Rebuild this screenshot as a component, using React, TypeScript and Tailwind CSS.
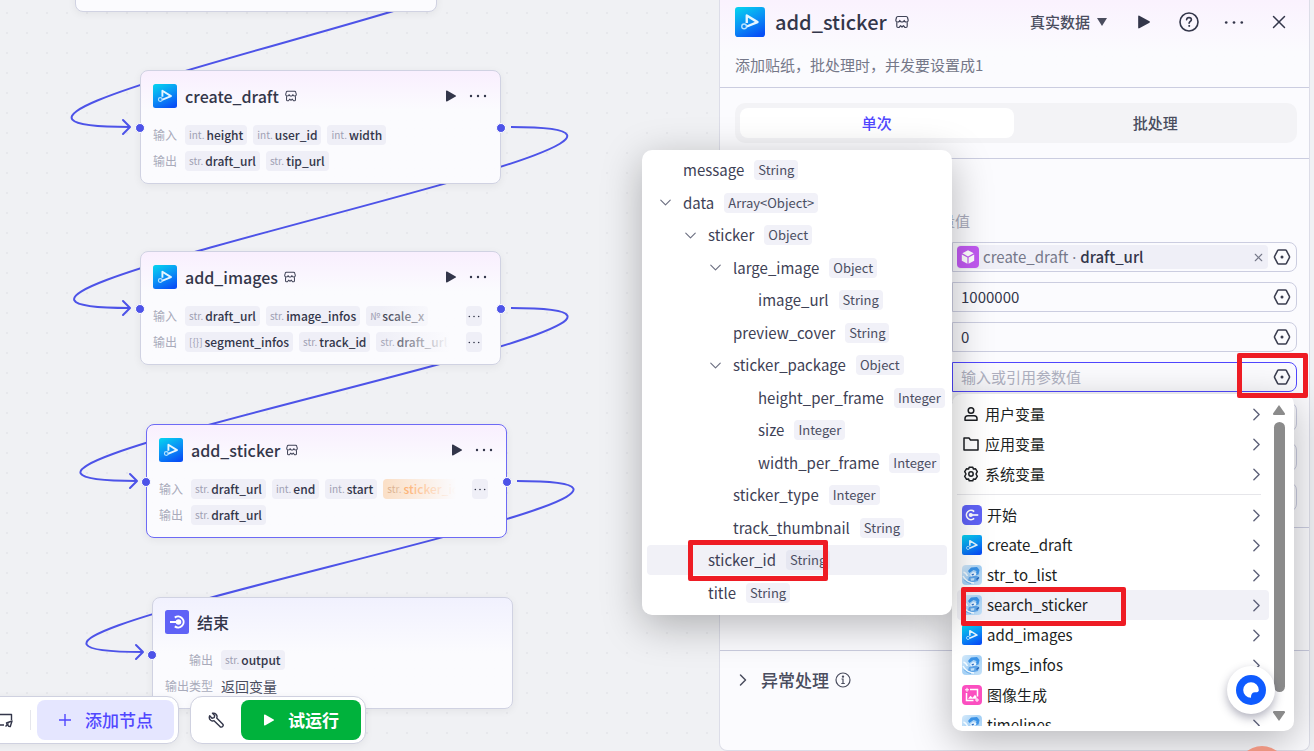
import type { ReactNode } from "react";
import { ChevronDown, ChevronRight, X } from "lucide-react";

type IconProps = { className?: string };

function PluginIcon({ className }: IconProps) {
  return (
    <svg viewBox="0 0 24 24" className={className} aria-hidden="true">
      <defs>
        <linearGradient id="plugin-bg" x1="0.2" y1="0" x2="0.7" y2="1">
          <stop offset="0" stopColor="#06cdf0" />
          <stop offset="0.5" stopColor="#0a92f5" />
          <stop offset="1" stopColor="#0850f6" />
        </linearGradient>
      </defs>
      <rect width="24" height="24" rx="2.5" fill="url(#plugin-bg)" />
      <path d="M9.400 12.800V6.800L18 12.100L8.900 15.800" fill="none" stroke="#e6f6ff" strokeWidth="1.900" strokeLinejoin="round" />
      <circle cx="7.300" cy="15.500" r="1.900" fill="none" stroke="#b5e2ff" strokeWidth="1.100" />
    </svg>
  );
}

function PhotoIcon({ className }: IconProps) {
  return (
    <svg viewBox="0 0 20 20" className={className} aria-hidden="true">
      <defs>
        <linearGradient id="photo-bg" x1="0" y1="0" x2="1" y2="1">
          <stop offset="0" stopColor="#d6ebfb" />
          <stop offset="0.5" stopColor="#a4d0f5" />
          <stop offset="1" stopColor="#c6e2f9" />
        </linearGradient>
      </defs>
      <rect width="20" height="20" rx="4" fill="url(#photo-bg)" />
      <path d="M9 2.500l6-.5 2.500 3-1 4.500-3 .5 1-4-3-1-4 3-1.500-2z" fill="#3a92e6" />
      <path d="M8 9.500l3-2.500 3.500 1-1 3.500-4 1z" fill="#e6f4ff" />
      <path d="M9.500 9.300l2-.8.500 1.500-2 .5z" fill="#2d6fc4" />
      <path d="M7 12l7-1.500 3 1.500-1 4-6 1.500-4-2z" fill="#5ea3e6" />
      <path d="M8.500 13.500l4-.5-.5 2.500-3 .3z" fill="#bfdff8" />
      <path d="M1 11c2 4 5 6.500 11 7M1.500 7c1.500.5 3 2 4 4" stroke="#f4fbff" strokeWidth="1.500" fill="none" />
      <path d="M2 14.500c2 2.500 4 3.500 7 4" stroke="#69aeea" strokeWidth="1" fill="none" />
      <path d="M14.500 14.500l2.500-2" stroke="#2360b4" strokeWidth="1.300" />
    </svg>
  );
}

function StoreIcon({ className }: IconProps) {
  return (
    <svg viewBox="0 0 14 14" className={className} fill="none" stroke="#414458" strokeWidth="1.200" strokeLinejoin="round" strokeLinecap="round" aria-hidden="true">
      <path d="M2.800 1.500h8.400c.8 0 1.200.4 1.300 1l.7 2.700c0 1-.9 1.800-1.900 1.800s-2.100-.7-2.100-1.700C9.200 6.300 8.100 7 7 7s-2.200-.7-2.200-1.700C4.800 6.300 3.700 7 2.700 7S.8 6.200.8 5.200l.7-2.700c.1-.6.500-1 1.300-1z" />
      <path d="M1.800 7.500v3.800c0 .8.400 1.200 1.200 1.200h1L5.600 10.600 7 12l1.400-1.400L10 12.500h1c.8 0 1.200-.4 1.200-1.200V7.500" />
    </svg>
  );
}

function PlayIcon({ className }: IconProps) {
  return (
    <svg viewBox="0 0 12 12" className={className} fill="currentColor" aria-hidden="true">
      <path d="M1 1.200c0-.7.500-.9 1-.6l8.700 4.800c.500.300.500.900 0 1.200L2 11.400c-.500.300-1 .1-1-.6z" />
    </svg>
  );
}

function DotsIcon({ className }: IconProps) {
  return (
    <svg viewBox="0 0 18 4" className={className} fill="currentColor" aria-hidden="true">
      <circle cx="2" cy="2" r="1.200" />
      <circle cx="9" cy="2" r="1.200" />
      <circle cx="16" cy="2" r="1.200" />
    </svg>
  );
}

function HexIcon() {
  return (
    <svg viewBox="0 0 18 18" className="size-[18px]" fill="none" stroke="#3a3d4f" strokeWidth="1.500" strokeLinejoin="round" aria-hidden="true">
      <path d="M5.600 2h6.800c.400 0 .8.200 1 .6l3 5.700c.2.500.2.900 0 1.400l-3 5.700c-.2.400-.6.600-1 .6H5.600c-.400 0-.8-.2-1-.6l-3-5.700c-.2-.500-.2-.900 0-1.400l3-5.700c.2-.400.6-.6 1-.6z" />
      <circle cx="9" cy="9" r="1.500" fill="#3a3d4f" stroke="none" />
    </svg>
  );
}

function TerminalIcon({ className, flip }: IconProps & { flip?: boolean }) {
  return (
    <svg viewBox="0 0 24 24" className={className} aria-hidden="true">
      <rect width="24" height="24" rx={flip ? 5 : 2.5} fill="#5f62f6" />
      <g fill="none" stroke="#fff" strokeWidth="2">
        {flip ? (
          <>
            <path d="M14.600 8A5.500 5.500 0 1 0 14.600 16" />
            <path d="M11 12h8.500" />
            <circle cx="10.500" cy="12" r="1.500" fill="#fff" />
          </>
        ) : (
          <>
            <path d="M9.800 7.600A5.500 5.500 0 1 1 9.800 16.400" />
            <path d="M5 12h8" />
            <circle cx="13.500" cy="12" r="1.800" fill="#fff" />
          </>
        )}
      </g>
    </svg>
  );
}

function GeneratedImageIcon({ className }: IconProps) {
  return (
    <svg viewBox="0 0 20 20" className={className} aria-hidden="true">
      <rect width="20" height="20" rx="4" fill="#fb4fc0" />
      <path d="M8 4.500h7.500v7M4.500 8v7.500h7" fill="none" stroke="#fff" strokeWidth="1.500" />
      <path d="M6 13.800l2.500-3 2 2 2.500-3 1.500 2v2z" fill="#fff" />
      <path d="M5 2.800v4M3 4.800h4M15 13v4M13 15h4" stroke="#fff" strokeWidth="1" />
    </svg>
  );
}

function CubeIcon() {
  return (
    <svg viewBox="0 0 22 22" className="size-[22px] shrink-0" aria-hidden="true">
      <rect width="22" height="22" rx="4" fill="#c159f1" />
      <path d="M11 4.300l5.700 3L11 10.400 5.300 7.300z" fill="#fff" />
      <path d="M4.800 8.500l5.600 3v6.300l-5.600-3.100zM17.200 8.500l-5.600 3v6.300l5.600-3.100z" fill="#fff" />
    </svg>
  );
}

type Field = { kind: string; name: string; warn?: boolean };

function Chip({ kind, name, warn }: Field) {
  return (
    <span className={`flex h-5 shrink-0 items-center gap-[2px] rounded-[4px] px-1 ${warn ? "bg-[#fbe0c8]" : "bg-[#efeff7]"}`}>
      <span className={`text-[10px] leading-5 ${warn ? "text-[#d9ad88]" : "text-[#9fa1b4]"}`}>{kind}</span>
      <span className={`text-[12px] leading-5 font-medium ${warn ? "text-[#ff9640]" : "text-[#33364a]"}`}>{name}</span>
    </span>
  );
}

function FieldRow({ label, fields, more }: { label: string; fields: Field[]; more?: boolean }) {
  return (
    <div className="flex h-5 items-center gap-2">
      <span className="w-6 shrink-0 text-[12px] leading-5 text-[#a9abbb]">{label}</span>
      <div className="relative flex min-w-0 flex-1 gap-[6px] overflow-hidden">
        {fields.map((f) => (
          <Chip key={f.name} {...f} />
        ))}
        {more && (
          <span className="absolute inset-y-0 right-0 flex w-[108px] items-center justify-end bg-linear-to-r from-transparent to-[#fbfbfe] to-65% pr-[6px]">
            <span className="flex h-5 w-4 items-center justify-center rounded-[4px] bg-[#efeff7] text-[#33364a]">
              <DotsIcon className="h-[3px] w-3" />
            </span>
          </span>
        )}
      </div>
    </div>
  );
}

function Port({ side }: { side: "left" | "right" }) {
  return (
    <span
      className={`absolute top-[52px] size-[10px] rounded-full border border-white bg-[#4d53e8] ${
        side === "left" ? "left-[-6px]" : "right-[-6px]"
      }`}
    />
  );
}

type NodeProps = { title: string; place: string; border: string; inputs: Field[]; outputs: Field[]; moreIn?: boolean; moreOut?: boolean };

function PluginNode({ title, place, border, inputs, outputs, moreIn, moreOut }: NodeProps) {
  return (
    <article className={`absolute w-[361px] rounded-lg border bg-linear-to-b from-[#f9effe] to-[#fbfbfe] to-35% px-3 pt-[13px] pb-3 shadow-[0_2px_8px_rgba(0,0,0,0.06)] ${border} ${place}`}>
      <Port side="left" />
      <Port side="right" />
      <header className="flex h-6 items-center gap-2 pr-px">
        <PluginIcon className="size-6" />
        <h2 className="text-[16px] leading-6 font-medium text-[#33364a]">{title}</h2>
        <StoreIcon className="-ml-0.5 size-3" />
        <button type="button" aria-label="运行节点" className="ml-auto text-[#33364a]">
          <PlayIcon className="size-3" />
        </button>
        <button type="button" aria-label="更多" className="ml-1 text-[#33364a]">
          <DotsIcon className="h-1 w-[18px]" />
        </button>
      </header>
      <div className="mt-[17px] flex flex-col gap-[6px]">
        <FieldRow label="输入" fields={inputs} more={moreIn} />
        <FieldRow label="输出" fields={outputs} more={moreOut} />
      </div>
    </article>
  );
}

function Edge({ d, x, y }: { d: string; x: number; y: number }) {
  return (
    <g>
      <path d={d} />
      <path d={`M${x - 7} ${y - 7}L${x} ${y}L${x - 7} ${y + 7}`} strokeLinecap="round" strokeLinejoin="round" />
    </g>
  );
}

function Canvas() {
  return (
    <section aria-label="工作流" className="absolute inset-0 overflow-hidden bg-[#f0f1f4] bg-[radial-gradient(#e7e8ec_1px,transparent_1.5px)] bg-size-[20px_20px] bg-position-[-3px_3px]">
      <svg className="absolute top-0 left-0 h-full w-full" fill="none" stroke="#4d53e8" strokeWidth="2" aria-hidden="true">
        <Edge d="M446 -45C740 -45 -160 127 130 127" x={130} y={127} />
        <Edge d="M511 127C805 127 -163 308 130 308" x={130} y={308} />
        <Edge d="M511 308C805 308 -157 481 137 481" x={137} y={481} />
        <Edge d="M517 481C811 481 -151 652 143 652" x={143} y={652} />
      </svg>
      <article className="absolute top-[-102px] left-[75px] h-[114px] w-[362px] rounded-lg border border-[#d0d2e2] bg-[#fbfbfe] shadow-[0_2px_8px_rgba(0,0,0,0.06)]" />
      <PluginNode
        title="create_draft"
        place="left-[140px] top-[70px]"
        border="border-[#d0d2e2]"
        inputs={[{ kind: "int.", name: "height" }, { kind: "int.", name: "user_id" }, { kind: "int.", name: "width" }]}
        outputs={[{ kind: "str.", name: "draft_url" }, { kind: "str.", name: "tip_url" }]}
      />
      <PluginNode
        title="add_images"
        place="left-[140px] top-[251px]"
        border="border-[#d0d2e2]"
        moreIn
        moreOut
        inputs={[{ kind: "str.", name: "draft_url" }, { kind: "str.", name: "image_infos" }, { kind: "№", name: "scale_x" }]}
        outputs={[{ kind: "[{}]", name: "segment_infos" }, { kind: "str.", name: "track_id" }, { kind: "str.", name: "draft_url" }]}
      />
      <PluginNode
        title="add_sticker"
        place="left-[146px] top-[424px]"
        border="border-[#6d6af5]"
        moreIn
        inputs={[{ kind: "str.", name: "draft_url" }, { kind: "int.", name: "end" }, { kind: "int.", name: "start" }, { kind: "str.", name: "sticker_id", warn: true }]}
        outputs={[{ kind: "str.", name: "draft_url" }]}
      />
      <article className="absolute top-[597px] left-[152px] h-[112px] w-[361px] rounded-lg border border-[#d0d2e2] bg-linear-to-b from-[#f1f1fe] to-[#fbfbfe] to-50% px-3 pt-3 shadow-[0_2px_8px_rgba(0,0,0,0.06)]">
        <Port side="left" />
        <header className="flex h-6 items-center gap-2">
          <TerminalIcon className="size-6" />
          <h2 className="text-[16px] leading-6 font-medium text-[#33364a]">结束</h2>
        </header>
        <dl className="mt-4 grid grid-cols-[48px_1fr] gap-x-2 gap-y-[6px]">
          <dt className="text-right text-[12px] leading-5 text-[#a9abbb]">输出</dt>
          <dd className="flex"><Chip kind="str." name="output" /></dd>
          <dt className="text-right text-[12px] leading-5 text-[#a9abbb]">输出类型</dt>
          <dd className="text-[14px] leading-5 text-[#4a4d5e]">返回变量</dd>
        </dl>
      </article>

      <div className="absolute bottom-[7px] left-[-41px] flex gap-[11px]">
        <div className="flex h-12 items-center rounded-xl border border-[#cfd1e0] bg-white pr-1 pl-[37px] shadow-[0_2px_8px_rgba(0,0,0,0.06)]">
          <button type="button" aria-label="注释" className="text-[#33364a]">
            <svg viewBox="0 0 16 16" className="size-4" fill="none" stroke="currentColor" strokeWidth="1.400" strokeLinejoin="round">
              <path d="M7 13H2V2.500h12.500V8" />
              <path d="M15 9l-5.500 2 .8 1.600 1.400 1.600 1.600.3z" />
              <path d="M8.500 14.500l3-3" />
            </svg>
          </button>
          <span className="mr-[6px] ml-[17px] h-5 w-px bg-[#e5e6ec]" />
          <button type="button" className="flex h-10 items-center gap-[13px] rounded-lg bg-[#e5e6ff] px-[21px] text-[17px] leading-6 font-medium text-[#5147ff]">
            <svg viewBox="0 0 14 14" className="size-[14px]" stroke="currentColor" strokeWidth="1.400">
              <path d="M7 1v12M1 7h12" />
            </svg>
            添加节点
          </button>
        </div>
        <div className="flex h-12 items-center rounded-xl border border-[#cfd1e0] bg-white pr-1 pl-[17px] shadow-[0_2px_8px_rgba(0,0,0,0.06)]">
          <button type="button" aria-label="调试工具" className="text-[#33364a]">
            <svg viewBox="0 0 16 16" className="size-4" fill="none" stroke="currentColor" strokeWidth="1.400" strokeLinejoin="round">
              <path d="M4.500 1.300L6.700 3.500 6.200 5.600 4 6.200 1.700 3.800C1 5.500 1.400 7.300 2.700 8.300 3.700 9 5 9.200 6 8.700L12 14.600C12.800 15.300 14 15.200 14.600 14.500 15.300 13.800 15.300 12.700 14.600 12L8.700 6C9.300 4.700 9 3.200 8 2.200 7 1.200 5.700 1 4.500 1.300z" />
            </svg>
          </button>
          <button type="button" className="ml-[17px] flex h-10 items-center gap-[13px] rounded-lg bg-[#00b23c] px-[22px] text-[17px] leading-6 font-bold text-white">
            <PlayIcon className="size-3" />
            试运行
          </button>
        </div>
      </div>
    </section>
  );
}

type TreeRow = { name: string; type: string; level: number; open?: boolean; marked?: boolean };

const treeRows: TreeRow[] = [
  { name: "message", type: "String", level: 0 },
  { name: "data", type: "Array<Object>", level: 0, open: true },
  { name: "sticker", type: "Object", level: 1, open: true },
  { name: "large_image", type: "Object", level: 2, open: true },
  { name: "image_url", type: "String", level: 3 },
  { name: "preview_cover", type: "String", level: 2 },
  { name: "sticker_package", type: "Object", level: 2, open: true },
  { name: "height_per_frame", type: "Integer", level: 3 },
  { name: "size", type: "Integer", level: 3 },
  { name: "width_per_frame", type: "Integer", level: 3 },
  { name: "sticker_type", type: "Integer", level: 2 },
  { name: "track_thumbnail", type: "String", level: 2 },
  { name: "sticker_id", type: "String", level: 1, marked: true },
  { name: "title", type: "String", level: 1 },
];

const indents = ["pl-[10px]", "pl-[35px]", "pl-[60px]", "pl-[85px]"];

function VariableTree() {
  return (
    <ul className="absolute top-[-244px] right-full flex h-[465px] w-[310px] flex-col rounded-[10px] bg-white p-[5px] shadow-[0_10px_40px_rgba(0,0,0,0.28)]">
      {treeRows.map((row) => (
        <li key={row.name} className="relative flex-1">
          <div className={`flex h-[30px] items-center gap-[10px] rounded-[4px] ${indents[row.level]} ${row.marked ? "bg-[#f1f1f7]" : ""}`}>
            <span className="flex w-4 shrink-0 justify-center text-[#6b6e80]">{row.open && <ChevronDown className="size-[19px] shrink-0" strokeWidth={1.4} />}</span>
            <span className="text-[15px] leading-6 text-[#3e4155]">{row.name}</span>
            <span className={`rounded-[4px] px-1 text-[13px] leading-5 text-[#4b4e62] ${row.marked ? "bg-[#e6e7f1]" : "bg-[#f1f1f8]"}`}>{row.type}</span>
          </div>
          {row.marked && <span className="absolute top-[-5px] left-[41px] h-[41px] w-[140px] rounded-[2px] border-[5px] border-[#ee1c24]" />}
        </li>
      ))}
    </ul>
  );
}

const scopes: { name: string; icon: ReactNode }[] = [
  {
    name: "用户变量",
    icon: (
      <>
        <circle cx="8" cy="4.500" r="2.800" />
        <path d="M2 14.200v-1.700c0-1.600 1.200-2.800 2.800-2.800h6.400c1.600 0 2.800 1.200 2.800 2.800v1.700z" />
      </>
    ),
  },
  { name: "应用变量", icon: <path d="M1 2h5l1.500 2H15v10H1z" /> },
  {
    name: "系统变量",
    icon: (
      <>
        <path d="M6.200 1.200h3.600l.6 1.900 2-.4 1.900 3L13 8l1.300 2.300-1.900 3-2-.4-.6 1.900H6.200l-.6-1.900-2 .4-1.900-3L3 8 1.700 5.700l1.900-3 2 .4z" />
        <circle cx="8" cy="8" r="2.200" />
      </>
    ),
  },
];

const sources: { name: string; icon: ReactNode; marked?: boolean }[] = [
  { name: "开始", icon: <TerminalIcon flip className="size-5" /> },
  { name: "create_draft", icon: <PluginIcon className="size-5" /> },
  { name: "str_to_list", icon: <PhotoIcon className="size-5" /> },
  { name: "search_sticker", icon: <PhotoIcon className="size-5" />, marked: true },
  { name: "add_images", icon: <PluginIcon className="size-5" /> },
  { name: "imgs_infos", icon: <PhotoIcon className="size-5" /> },
  { name: "图像生成", icon: <GeneratedImageIcon className="size-5" /> },
  { name: "timelines", icon: <PhotoIcon className="size-5" /> },
];

function SourceMenu() {
  return (
    <div className="absolute top-8 right-[3px] z-10 w-[342px]">
      <div className="flex h-[337px] rounded-[10px] bg-white p-[5px] shadow-[0_10px_40px_rgba(0,0,0,0.28)]">
        <div className="flex-1 overflow-hidden">
          <ul>
            {scopes.map((s) => (
              <li key={s.name}>
                <button type="button" className="flex h-[30px] w-full items-center gap-[6px] pr-0.5 pl-[6px] text-left text-[15px] leading-6 text-[#1c1f23]">
                  <svg viewBox="0 0 16 16" className="size-4" fill="none" stroke="currentColor" strokeWidth="1.500" strokeLinejoin="round" aria-hidden="true">{s.icon}</svg>
                  {s.name}
                  <ChevronRight className="ml-auto size-[21px] text-[#5d6078]" strokeWidth={1.6} />
                </button>
              </li>
            ))}
          </ul>
          <hr className="mt-[5px] mr-2 mb-[5px] border-[#e6e6ea]" />
          <ul>
            {sources.map((s) => (
              <li key={s.name} className="relative">
                <button type="button" className={`flex h-[30px] w-full items-center gap-[5px] rounded-[4px] pr-0.5 pl-[5px] text-left text-[15px] leading-6 text-[#1c1f23] ${s.marked ? "bg-[#f1f1f7]" : ""}`}>
                  {s.icon}
                  {s.name}
                  <ChevronRight className="ml-auto size-[21px] text-[#5d6078]" strokeWidth={1.6} />
                </button>
                {s.marked && <span className="absolute top-[-3px] left-1 z-10 h-[39px] w-[165px] rounded-[2px] border-[5px] border-[#ee1c24]" />}
              </li>
            ))}
          </ul>
        </div>
        <div className="flex w-5 flex-col items-center pt-[6px] pb-[5px] text-[#8b8b8b]">
          <svg viewBox="0 0 12 10" className="h-[10px] w-3" fill="currentColor" aria-hidden="true"><path d="M6 0l6 8.500c0 1-.5 1.500-1 1.500H1c-.5 0-1-.5-1-1.500z" /></svg>
          <span className="mt-[7px] h-[270px] w-[11px] rounded-full bg-[#8b8b8b]" />
          <svg viewBox="0 0 12 10" className="mt-auto h-[10px] w-3" fill="currentColor" aria-hidden="true"><path d="M6 10L0 1.500C0 .5.500 0 1 0h10c.5 0 1 .5 1 1.500z" /></svg>
        </div>
      </div>
      <VariableTree />
    </div>
  );
}

function ValueField({ children, active }: { children?: ReactNode; active?: boolean }) {
  return (
    <div className={`relative flex h-[30px] items-center rounded-r-lg border bg-[#fbfbfe] ${active ? "border-[#5147ff]" : "border-[#cbcde0]"}`}>
      {children}
      <button type="button" aria-label="引用变量" className="ml-auto flex w-[28px] shrink-0 justify-center">
        <HexIcon />
      </button>
    </div>
  );
}

function Inspector() {
  const box = "h-full min-w-0 flex-1 bg-transparent px-2 pb-0.5 text-[15px] text-[#33364a] outline-none placeholder:text-[#b0b2c2]";
  return (
    <aside className="relative mr-1 flex h-full w-[591px] flex-col rounded-b-lg border border-t-0 border-[#dcdde8] bg-[#fbfbfe]">
      <header className="border-b border-[#cbcde0] bg-linear-to-b from-[#faf2fe] to-[#fbfbfe] to-60% pt-[7px] pr-3 pb-[10px] pl-[15px]">
        <div className="flex h-[30px] items-center">
          <PluginIcon className="size-[30px]" />
          <h1 className="ml-[10px] text-[20px] leading-[30px] font-medium text-[#33364a]">add_sticker</h1>
          <StoreIcon className="ml-2 size-[14px]" />
          <button type="button" className="mr-[19px] ml-auto flex items-center gap-[7px] text-[15px] leading-6 font-medium text-[#4a4d5e]">
            真实数据
            <svg viewBox="0 0 10 8" className="h-2 w-[10px]" fill="currentColor" aria-hidden="true"><path d="M0 0h10L5 8z" /></svg>
          </button>
          <div className="flex gap-[9px] text-[#33364a]">
            <button type="button" aria-label="运行" className="flex h-6 w-9 items-center justify-center"><PlayIcon className="size-[14px]" /></button>
            <button type="button" aria-label="帮助" className="flex h-6 w-9 items-center justify-center">
              <svg viewBox="0 0 20 20" className="size-5" fill="none" stroke="currentColor" strokeWidth="1.600" strokeLinecap="round">
                <circle cx="10" cy="10" r="9" />
                <path d="M7.600 7.800c.1-1.300 1.100-2.200 2.400-2.200s2.400.9 2.400 2.100c0 1.600-2.300 1.800-2.300 3.500" />
                <circle cx="10.100" cy="13.900" r=".5" fill="currentColor" strokeWidth="1" />
              </svg>
            </button>
            <button type="button" aria-label="更多" className="flex h-6 w-9 items-center justify-center"><DotsIcon className="h-[5px] w-5" /></button>
            <button type="button" aria-label="关闭" className="flex h-6 w-9 items-center justify-center"><X className="size-[22px]" strokeWidth={1.6} /></button>
          </div>
        </div>
        <p className="mt-4 text-[15px] leading-6 text-[#757889]">添加贴纸，批处理时，并发要设置成1</p>
      </header>

      <div className="border-b border-[#cbcde0] pt-[15px] pr-3 pb-[15px] pl-[15px]">
        <div role="tablist" className="flex h-10 gap-[5px] rounded-[10px] bg-[#f3f3f6] p-[5px] text-[15px] leading-[30px] font-medium">
          <button role="tab" type="button" aria-selected="true" className="flex-1 rounded-lg bg-white text-[#5147ff]">单次</button>
          <button role="tab" type="button" aria-selected="false" className="flex-1 text-[#4a4d5e]">批处理</button>
        </div>
      </div>

      <div className="flex justify-end border-b border-[#cbcde0] pt-[51px] pr-3 pb-[15px]">
        <div className="flex w-[345px] flex-col gap-[10px]">
          <span className="-ml-[27px] text-[15px] leading-[22px] text-[#a9abbb]">变量值</span>
          <ValueField>
            <span className="ml-1 flex h-6 min-w-0 flex-1 items-center rounded-[4px] bg-[#efeff7] text-[15px] leading-6 text-[#757889]">
              <CubeIcon />
              <span className="ml-1">create_draft<span className="font-['Noto_Sans']"> · </span><span className="font-medium text-[#33364a]">draft_url</span></span>
              <button type="button" aria-label="清除" className="mr-[3px] ml-auto"><X className="size-[13px]" strokeWidth={2} /></button>
            </span>
          </ValueField>
          <ValueField><input aria-label="结束时间" className={box} defaultValue="1000000" /></ValueField>
          <ValueField><input aria-label="开始时间" className={box} defaultValue="0" /></ValueField>
          <div className="relative">
            <ValueField active><input aria-label="贴纸" className={box} placeholder="输入或引用参数值" /></ValueField>
            <SourceMenu />
            <span className="absolute top-[-9px] right-[-11px] z-20 h-[45px] w-[71px] rounded-[2px] border-[5px] border-[#ee1c24]" />
          </div>
          <ValueField />
          <ValueField />
          <ValueField />
        </div>
      </div>
      <div className="h-[123px] border-b border-[#cbcde0]" />
      <button type="button" className="mt-[17px] ml-[13px] flex items-center gap-2 self-start text-[17px] leading-6 font-medium text-[#4a4d5e]">
        <ChevronRight className="size-5" strokeWidth={1.8} />
        异常处理
        <svg viewBox="0 0 16 16" className="-ml-0.5 size-4" fill="none" stroke="currentColor" strokeWidth="1.200" aria-hidden="true">
          <circle cx="8" cy="8" r="7" />
          <path d="M6.500 7H8v4.500M6.300 11.500h3.500" />
          <circle cx="8" cy="4.600" r=".6" fill="currentColor" />
        </svg>
      </button>
    </aside>
  );
}

export default function App() {
  return (
    <main className="relative flex h-screen justify-end overflow-hidden font-['Noto_Sans_CJK_SC',sans-serif]">
      <Canvas />
      <Inspector />
      <button type="button" aria-label="智能助手" className="absolute right-[39px] bottom-[37px] z-30 flex size-12 items-center justify-center rounded-full bg-white shadow-[0_4px_10px_rgba(60,60,90,0.4)]">
        <svg viewBox="0 0 30 30" className="size-[30px]" aria-hidden="true">
          <circle cx="15" cy="15" r="15" fill="#0f5bff" />
          <path d="M22.800 15A7.800 7.800 0 1 0 15 22.800C15 19 16.500 17.500 18 17.500c1.500-.5 4.800.5 4.800-2.500z" fill="#fff" />
        </svg>
      </button>
      <span className="absolute right-[27px] bottom-[-45px] z-10 size-[50px] rounded-full bg-[#ea9480]" />
    </main>
  );
}
